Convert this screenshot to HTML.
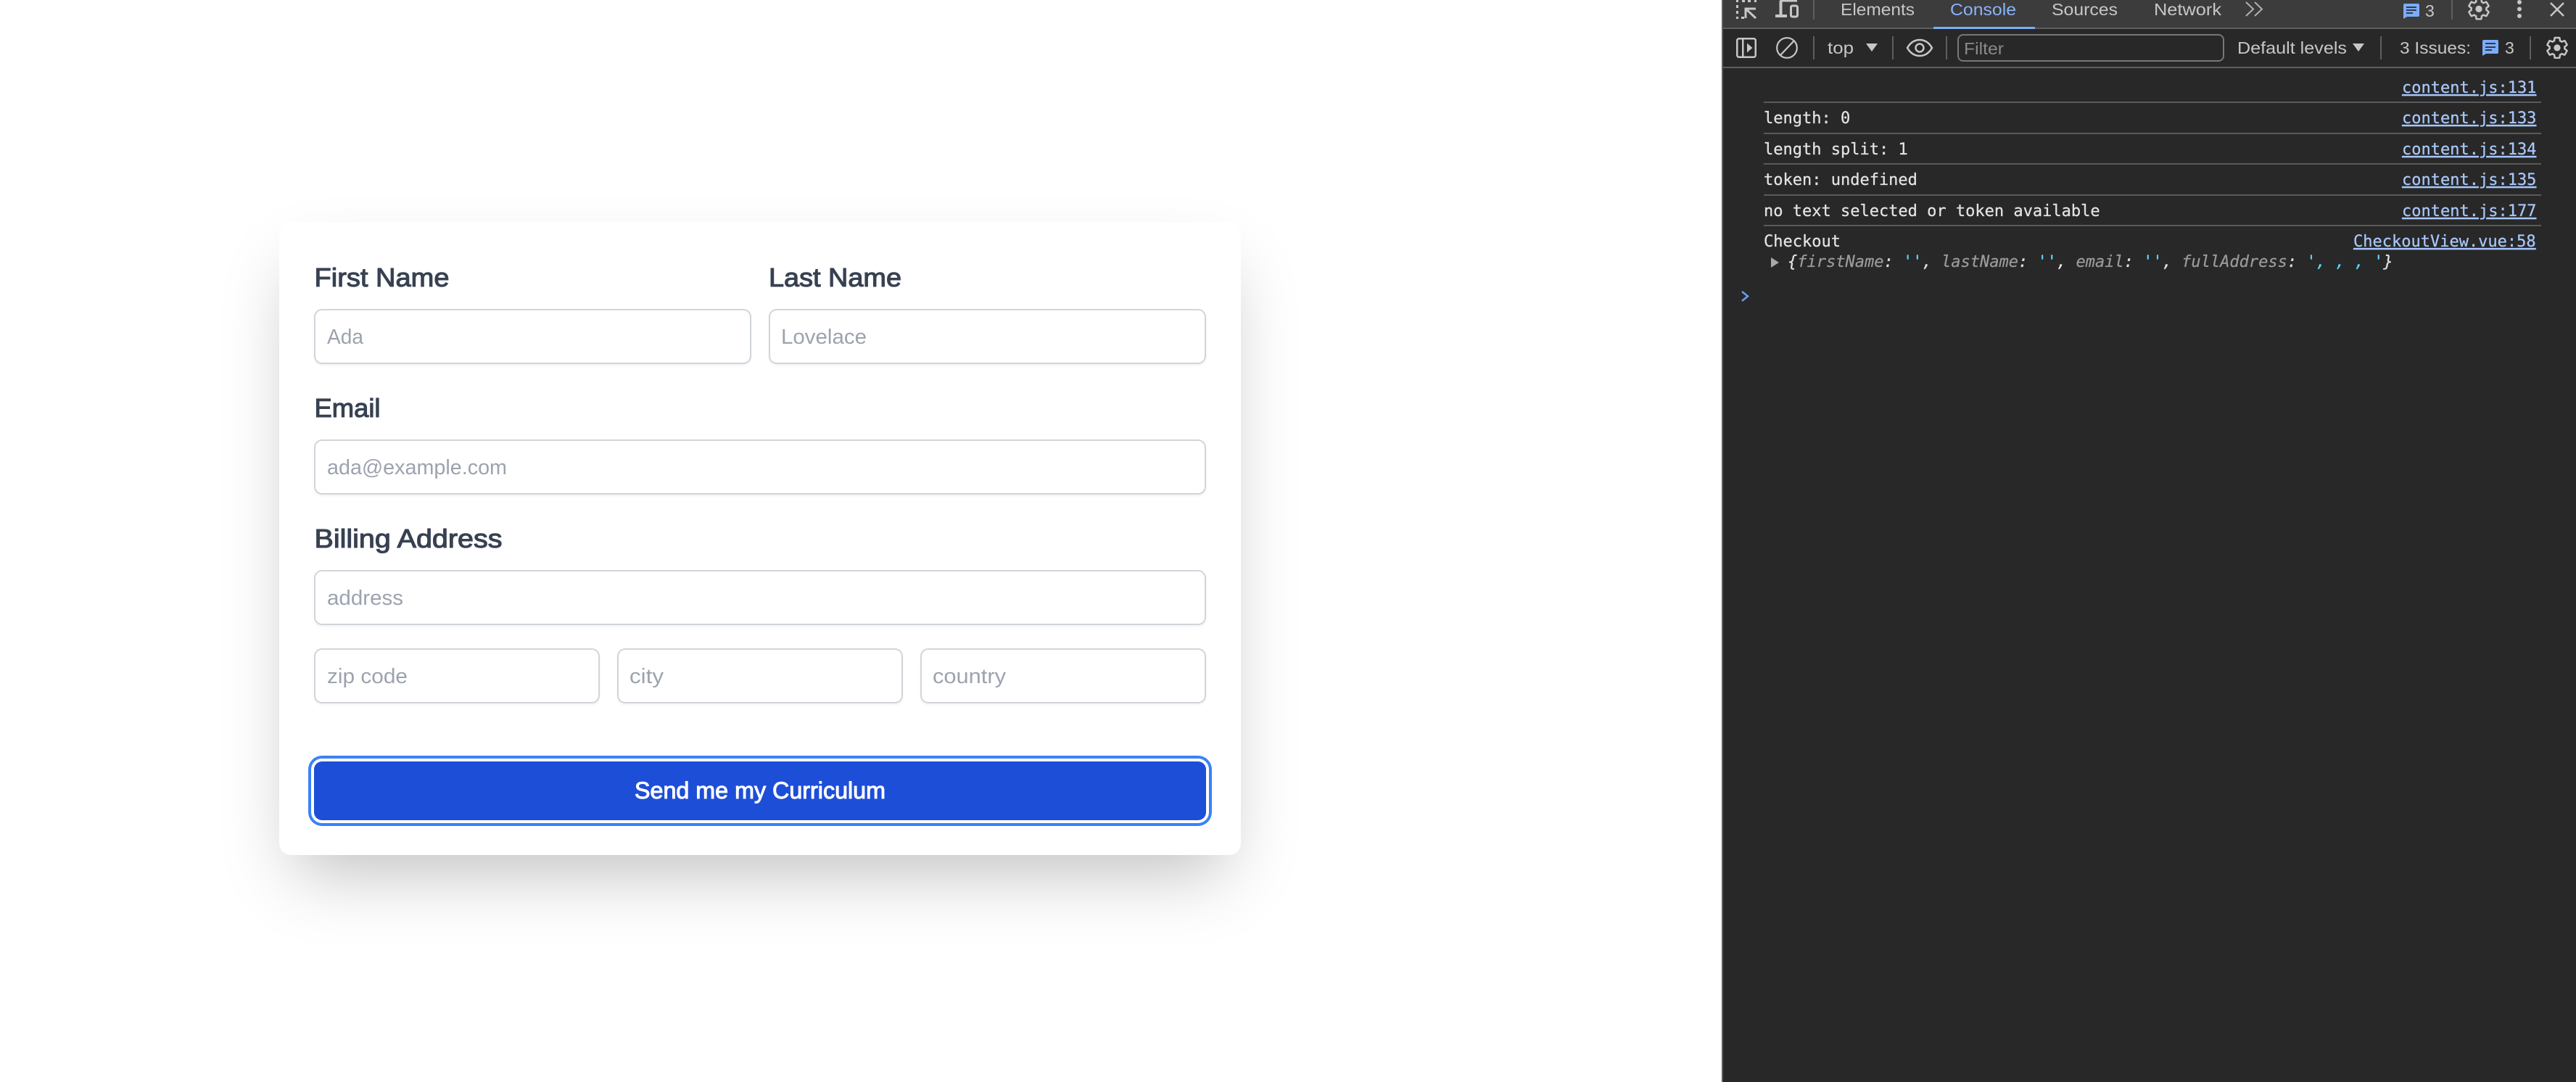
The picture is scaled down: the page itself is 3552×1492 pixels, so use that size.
<!DOCTYPE html>
<html lang="en">
<head>
<meta charset="utf-8">
<title>Checkout</title>
<style>
html,body{margin:0;padding:0;background:#fff;width:3552px;height:1492px;overflow:hidden}
.a{position:absolute;box-sizing:border-box}
.card{left:385px;top:306px;width:1326px;height:873px;background:#fff;border-radius:16px;box-shadow:0 45px 90px -22px rgba(0,0,0,.25)}
.in{background:#fff;border:2.5px solid #d1d5db;border-radius:11px;box-shadow:0 2px 3px rgba(0,0,0,.05);height:76px}
.btn{left:433px;top:1050px;width:1230px;height:81px;background:#1d4ed8;border-radius:11px;box-shadow:0 0 0 4px #fff,0 0 0 8px #3b82f6}
.dt{left:2376px;top:0;width:1176px;height:1492px;background:#282828;border-left:0}
svg{position:absolute;left:0;top:0}
.l{font:36px "Liberation Sans",sans-serif;fill:#374151;stroke:#374151;stroke-width:1.1px}
.p{font:29px "Liberation Sans",sans-serif;fill:#9ca3af}
.u{font:23px "Liberation Sans",sans-serif;fill:#c7c7c7}
.m{font:22px "DejaVu Sans Mono",monospace;fill:#e3e3e3;white-space:pre;stroke:#e3e3e3;stroke-width:.25px}
.r{font:22px "DejaVu Sans Mono",monospace;fill:#a8c7fa;text-decoration:underline;stroke:#a8c7fa;stroke-width:.25px}
.k{fill:#9a9a9a;stroke:#9a9a9a;font-style:italic}
.s{fill:#5cd5fb;stroke:#5cd5fb;font-style:italic}
.i{font-style:italic}
</style>
</head>
<body>
<div class="a card"></div>
<div class="a in" style="left:433px;top:426px;width:603px"></div>
<div class="a in" style="left:1060px;top:426px;width:603px"></div>
<div class="a in" style="left:433px;top:606px;width:1230px"></div>
<div class="a in" style="left:433px;top:786px;width:1230px"></div>
<div class="a in" style="left:433px;top:894px;width:394px"></div>
<div class="a in" style="left:851px;top:894px;width:394px"></div>
<div class="a in" style="left:1269px;top:894px;width:394px"></div>
<div class="a btn"></div>

<div class="a dt"></div>
<div class="a" style="left:2376px;top:0;width:1176px;height:38px;background:#3c3c3c"></div>
<div class="a" style="left:2376px;top:38px;width:1176px;height:2px;background:#5e5e5e"></div>
<div class="a" style="left:2376px;top:92px;width:1176px;height:2px;background:#5e5e5e"></div>
<div class="a" style="left:2374px;top:0;width:2px;height:1492px;background:#5e5e5e"></div>
<div class="a" style="left:2666px;top:37px;width:140px;height:3px;background:#7cacf8"></div>
<div class="a" style="left:2432px;top:140px;width:1072px;height:2px;background:#5a5a5a"></div>
<div class="a" style="left:2432px;top:183px;width:1072px;height:2px;background:#5a5a5a"></div>
<div class="a" style="left:2432px;top:225px;width:1072px;height:2px;background:#5a5a5a"></div>
<div class="a" style="left:2432px;top:268px;width:1072px;height:2px;background:#5a5a5a"></div>
<div class="a" style="left:2432px;top:310px;width:1072px;height:2px;background:#5a5a5a"></div>
<div class="a" style="left:2699px;top:47px;width:368px;height:38px;border:2px solid #777;border-radius:8px"></div>

<svg width="3552" height="1492" viewBox="0 0 3552 1492" xmlns="http://www.w3.org/2000/svg">
<!-- form text -->
<text class="l" x="433.500" y="395" textLength="186" lengthAdjust="spacingAndGlyphs">First Name</text>
<text class="l" x="1060" y="395" textLength="183" lengthAdjust="spacingAndGlyphs">Last Name</text>
<text class="l" x="433.500" y="575" textLength="91" lengthAdjust="spacingAndGlyphs">Email</text>
<text class="l" x="433.500" y="755" textLength="259" lengthAdjust="spacingAndGlyphs">Billing Address</text>
<text class="p" x="451" y="474" textLength="50" lengthAdjust="spacingAndGlyphs">Ada</text>
<text class="p" x="1077" y="474" textLength="118" lengthAdjust="spacingAndGlyphs">Lovelace</text>
<text class="p" x="451" y="654" textLength="248" lengthAdjust="spacingAndGlyphs">ada@example.com</text>
<text class="p" x="451" y="834" textLength="105" lengthAdjust="spacingAndGlyphs">address</text>
<text class="p" x="451" y="942" textLength="111" lengthAdjust="spacingAndGlyphs">zip code</text>
<text class="p" x="868" y="942" textLength="47" lengthAdjust="spacingAndGlyphs">city</text>
<text class="p" x="1286" y="942" textLength="101" lengthAdjust="spacingAndGlyphs">country</text>
<text x="875" y="1101" textLength="346" lengthAdjust="spacingAndGlyphs" style="font:32px 'Liberation Sans',sans-serif;fill:#fff;stroke:#fff;stroke-width:1px">Send me my Curriculum</text>

<!-- devtools tabs -->
<text class="u" x="2538" y="21" textLength="102" lengthAdjust="spacingAndGlyphs">Elements</text>
<text class="u" x="2689" y="21" textLength="91" lengthAdjust="spacingAndGlyphs" style="fill:#8ab4f8">Console</text>
<text class="u" x="2829" y="21" textLength="91" lengthAdjust="spacingAndGlyphs">Sources</text>
<text class="u" x="2970" y="21" textLength="93" lengthAdjust="spacingAndGlyphs">Network</text>
<text class="u" x="3344" y="23" textLength="13">3</text>
<path d="M3097 3l10 9.500-10 9.500M3109 3l10 9.500-10 9.500" fill="none" stroke="#b0b0b0" stroke-width="2"/>

<!-- inspect icon -->
<g fill="#c7c7c7">
<rect x="2394" y="0" width="3" height="3"/><rect x="2394" y="7" width="3" height="4"/><rect x="2394" y="15" width="3" height="4"/><rect x="2394" y="23" width="3" height="3"/>
<rect x="2401" y="23" width="4" height="3"/>
<rect x="2402" y="0" width="4" height="3"/><rect x="2410" y="0" width="4" height="3"/><rect x="2419" y="0" width="3" height="3"/>
</g>
<path d="M2407 25V12h14M2407 12l14 13" fill="none" stroke="#c7c7c7" stroke-width="3"/>
<!-- device icon -->
<path d="M2455.500 22V2.500a2 2 0 0 1 2-2h20.500" fill="none" stroke="#c7c7c7" stroke-width="4"/>
<rect x="2448" y="20" width="16" height="4" fill="#c7c7c7"/>
<rect x="2469.500" y="8" width="9" height="15" rx="2" fill="none" stroke="#c7c7c7" stroke-width="3"/>
<rect x="2500" y="0" width="2" height="27" fill="#5e5e5e"/>

<!-- top right -->
<path d="M3316 5h18a2 2 0 0 1 2 2v14a2 2 0 0 1-2 2h-15l-5 3V7a2 2 0 0 1 2-2z" fill="#7cacf8"/>
<path d="M3318 9h14v2h-14zM3318 13h14v2h-14zM3318 17h9v2h-9z" fill="#2e3b50"/>
<rect x="3380" y="0" width="2" height="27" fill="#5e5e5e"/>
<g transform="translate(3400.600 -5) scale(1.45)">
<path d="M19.140 12.940c.04-.3.06-.61.06-.94 0-.32-.02-.64-.07-.94l2.030-1.580a.49.49 0 0 0 .12-.61l-1.920-3.320a.488.488 0 0 0-.59-.22l-2.390.96c-.5-.38-1.030-.7-1.620-.94l-.36-2.540a.484.484 0 0 0-.48-.41h-3.840c-.24 0-.43.17-.47.41l-.36 2.540c-.59.24-1.130.57-1.620.94l-2.390-.96c-.22-.08-.47 0-.59.22L2.740 8.870c-.12.21-.08.47.12.61l2.030 1.580c-.05.3-.09.63-.09.94s.02.64.07.94l-2.030 1.580a.49.49 0 0 0-.12.61l1.920 3.320c.12.22.37.29.59.22l2.390-.96c.5.38 1.030.7 1.620.94l.36 2.540c.05.24.24.41.48.41h3.840c.24 0 .44-.17.47-.41l.36-2.540c.59-.24 1.130-.56 1.620-.94l2.390.96c.22.08.47 0 .59-.22l1.920-3.320c.12-.22.07-.47-.12-.61l-2.010-1.580z" fill="none" stroke="#c7c7c7" stroke-width="1.700"/>
<circle cx="12" cy="12" r="3.200" fill="#c7c7c7"/>
</g>
<circle cx="3474" cy="3" r="3" fill="#c7c7c7"/><circle cx="3474" cy="12.500" r="3" fill="#c7c7c7"/><circle cx="3474" cy="22" r="3" fill="#c7c7c7"/>
<path d="M3517 4l18 18M3535 4l-18 18" fill="none" stroke="#c7c7c7" stroke-width="2.500"/>

<!-- toolbar -->
<rect x="2395.250" y="53.250" width="25.500" height="25.500" rx="2.500" fill="none" stroke="#c7c7c7" stroke-width="2.500"/>
<rect x="2402" y="53" width="2.500" height="26" fill="#c7c7c7"/>
<path d="M2409 59.500l7.500 6.500-7.500 6.500z" fill="#c7c7c7"/>
<circle cx="2464" cy="66" r="13.800" fill="none" stroke="#c7c7c7" stroke-width="2.200"/>
<path d="M2455 76l19-20" stroke="#c7c7c7" stroke-width="2.200"/>
<rect x="2500" y="50" width="2" height="32" fill="#5e5e5e"/>
<text class="u" x="2520" y="74" textLength="36" lengthAdjust="spacingAndGlyphs">top</text>
<path d="M2573 60h16l-8 11z" fill="#c7c7c7"/>
<rect x="2609" y="50" width="2" height="32" fill="#5e5e5e"/>
<path d="M2630 66c4-7 10-11 17-11s13 4 17 11c-4 7-10 11-17 11s-13-4-17-11z" fill="none" stroke="#c7c7c7" stroke-width="2.500"/>
<circle cx="2647" cy="66" r="5.500" fill="none" stroke="#c7c7c7" stroke-width="2.500"/>
<rect x="2683" y="50" width="2" height="32" fill="#5e5e5e"/>
<text class="u" x="2708" y="75" textLength="55" lengthAdjust="spacingAndGlyphs" style="fill:#8a8a8a">Filter</text>
<text class="u" x="3085" y="74" textLength="151" lengthAdjust="spacingAndGlyphs">Default levels</text>
<path d="M3244 60h16l-8 11z" fill="#c7c7c7"/>
<rect x="3282" y="50" width="2" height="32" fill="#5e5e5e"/>
<text class="u" x="3309" y="74" textLength="98" lengthAdjust="spacingAndGlyphs">3 Issues:</text>
<path d="M3425 55h18a2 2 0 0 1 2 2v15a2 2 0 0 1-2 2h-15l-5 3V57a2 2 0 0 1 2-2z" fill="#7cacf8"/>
<path d="M3427 59h14v2h-14zM3427 64h14v2h-14zM3427 68h9v2h-9z" fill="#2e3b50"/>
<text class="u" x="3454" y="74" textLength="13">3</text>
<rect x="3488" y="50" width="2" height="32" fill="#5e5e5e"/>
<g transform="translate(3508.600 48.500) scale(1.45)">
<path d="M19.140 12.940c.04-.3.06-.61.06-.94 0-.32-.02-.64-.07-.94l2.030-1.580a.49.49 0 0 0 .12-.61l-1.920-3.320a.488.488 0 0 0-.59-.22l-2.390.96c-.5-.38-1.030-.7-1.620-.94l-.36-2.540a.484.484 0 0 0-.48-.41h-3.840c-.24 0-.43.17-.47.41l-.36 2.540c-.59.24-1.130.57-1.620.94l-2.390-.96c-.22-.08-.47 0-.59.22L2.740 8.870c-.12.21-.08.47.12.61l2.030 1.580c-.05.3-.09.63-.09.94s.02.64.07.94l-2.030 1.580a.49.49 0 0 0-.12.61l1.920 3.320c.12.22.37.29.59.22l2.390-.96c.5.38 1.030.7 1.620.94l.36 2.540c.05.24.24.41.48.41h3.840c.24 0 .44-.17.47-.41l.36-2.540c.59-.24 1.130-.56 1.620-.94l2.390.96c.22.08.47 0 .59-.22l1.920-3.320c.12-.22.07-.47-.12-.61l-2.010-1.580z" fill="none" stroke="#c7c7c7" stroke-width="1.700"/>
<circle cx="12" cy="12" r="3.200" fill="#c7c7c7"/>
</g>

<!-- console -->
<text class="r" x="3312" y="128">content.js:131</text>
<text class="m" x="2432" y="170">length: 0</text>
<text class="r" x="3312" y="170">content.js:133</text>
<text class="m" x="2432" y="213">length split: 1</text>
<text class="r" x="3312" y="213">content.js:134</text>
<text class="m" x="2432" y="255">token: undefined</text>
<text class="r" x="3312" y="255">content.js:135</text>
<text class="m" x="2432" y="298">no text selected or token available</text>
<text class="r" x="3312" y="298">content.js:177</text>
<text class="m" x="2432" y="340">Checkout</text>
<text class="r" x="3245" y="340">CheckoutView.vue:58</text>
<path d="M2442 355l11 7-11 7z" fill="#a8a8a8"/>
<text class="m" x="2465" y="368" xml:space="preserve"><tspan class="i">{</tspan><tspan class="k">firstName</tspan><tspan class="i">: </tspan><tspan class="s">''</tspan><tspan class="i">, </tspan><tspan class="k">lastName</tspan><tspan class="i">: </tspan><tspan class="s">''</tspan><tspan class="i">, </tspan><tspan class="k">email</tspan><tspan class="i">: </tspan><tspan class="s">''</tspan><tspan class="i">, </tspan><tspan class="k">fullAddress</tspan><tspan class="i">: </tspan><tspan class="s">', , , '</tspan><tspan class="i">}</tspan></text>
<path d="M2402 402l8 6.500-8 6.500" fill="none" stroke="#6a9ff0" stroke-width="2.500"/>
</svg>
</body>
</html>
